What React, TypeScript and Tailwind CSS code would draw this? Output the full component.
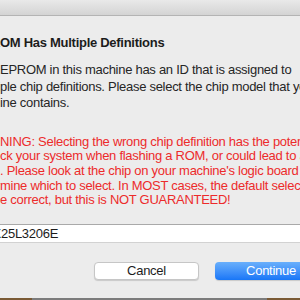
import React from "react";

const font = { fontFamily: '"Liberation Sans", Arial, sans-serif' };

function Line({ pre, text, className = "" }: { pre: string; text: string; className?: string }) {
  // the first part of each line sits left of the window edge
  return (
    <div className={`flex whitespace-nowrap ${className}`}>
      <span className="flex w-0 justify-end">{pre}</span>
      <span>{text}</span>
    </div>
  );
}

export default function App() {
  return (
    <div className="flex h-[300px] w-[300px] flex-col overflow-hidden bg-[#ececec] text-[13px] tracking-[-0.28px] text-[#262626]" style={font}>
      <div className="h-[16px] shrink-0 border-b border-[#b4b4b4] bg-linear-to-b from-[#e9e9e9] to-[#d4d4d4]" />

      <div className="flex flex-col pt-[19px]">
        <Line pre="EEPR" text="OM Has Multiple Definitions" className="font-bold leading-4 text-[#1c1c1c]" />

        <div className="mt-[11px] leading-[16.5px]">
          <Line pre="The E" text="EPROM in this machine has an ID that is assigned to" />
          <Line pre="multi" text="ple chip definitions. Please select the chip model that your" />
          <Line pre="mach" text="ine contains." />
        </div>

        <div className="mt-[23px] leading-[14.7px] text-[#ec2b2b]">
          <Line pre="WAR" text="NING: Selecting the wrong chip definition has the potential to" />
          <Line pre="bri" text="ck your system when flashing a ROM, or could lead to a failed" />
          <Line pre="flash" text=". Please look at the chip on your machine's logic board to" />
          <Line pre="deter" text="mine which to select. In MOST cases, the default selection should" />
          <Line pre="b" text="e correct, but this is NOT GUARANTEED!" />
        </div>

        <div className="-mx-2 mt-[16px] flex h-[19px] items-center border border-t-[#a9a9a9] border-r-[#c4c4c4] border-b-[#d2d2d2] border-l-[#c4c4c4] bg-white px-2 leading-4 text-[#1c1c1c]">
          <Line pre="MX" text="25L3206E" />
        </div>

        <div className="mt-[19px] flex gap-4 pl-[94px]">
          <button className="h-[18px] w-[105px] shrink-0 rounded-[4px] border border-[#c6c6c6] bg-white text-[13px] leading-4 text-[#1c1c1c] shadow-[0_1px_1px_rgba(0,0,0,0.15)]">
            Cancel
          </button>
          <button className="h-[18px] w-[112px] shrink-0 rounded-[4px] bg-linear-to-b from-[#69affb] to-[#1776f7] text-[13px] leading-4 text-white shadow-[0_1px_1px_rgba(0,0,0,0.15)]">
            Continue
          </button>
        </div>
      </div>

      <div className="mt-auto flex h-[2px] shrink-0">
        <div className="w-[32px] bg-[#7a5a35]" />
        <div className="flex-1 bg-[#7c7c7c]" />
        <div className="w-[33px] bg-[#7a5a35]" />
      </div>
    </div>
  );
}
